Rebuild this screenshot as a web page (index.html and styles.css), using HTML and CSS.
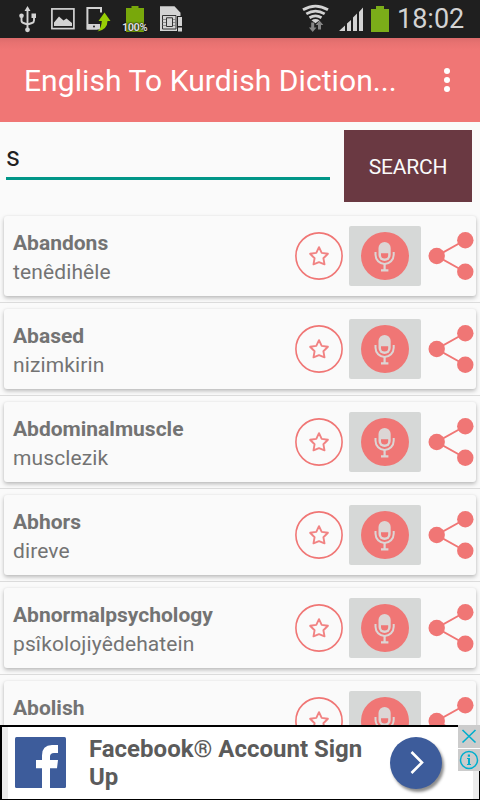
FILE: index.html
```html
<!DOCTYPE html>
<html lang="en">
<head>
    <meta charset="UTF-8">
    <meta name="viewport" content="width=device-width, initial-scale=1.0">
    <title>English To Kurdish Dictionary</title>
    <link rel="stylesheet" href="styles.css">
</head>
<body>
    <svg class="symbols">
        <symbol id="star" viewBox="0 0 48 48">
            <circle cx="24" cy="24" r="23.1" fill="none" stroke="#f07675" stroke-width="1.6"/>
            <path d="M24 15.200l2.700 5.700 6.200.9-4.500 4.400 1.100 6.100-5.500-2.100-5.500 2.100 1.100-6.100-4.500-4.400 6.200-.9z" fill="none" stroke="#f07675" stroke-width="1.900" stroke-linejoin="round" opacity=".9"/>
        </symbol>
        <symbol id="mic" viewBox="0 0 48 48">
            <circle cx="24" cy="24" r="24" fill="#f07675"/>
            <path d="M17.500 16a6.100 6.100 0 0 1 12.200 0v7a6.100 6.100 0 0 1-12.200 0z" fill="#dcd6d5"/>
            <path d="M20 21.300h7.200v1.700a3.600 3.600 0 0 1-7.200 0z" fill="#f07675"/>
            <path d="M14.500 20v2.800a9.100 9.100 0 0 0 18.200 0V20" fill="none" stroke="#dcd6d5" stroke-width="2"/>
            <path d="M23.600 31.500v7M20 38.300h7.400" fill="none" stroke="#dcd6d5" stroke-width="2.200"/>
        </symbol>
        <symbol id="share" viewBox="0 0 46 48">
            <path d="M37.300 8L8.700 24l28.600 16" fill="none" stroke="#f07675" stroke-width="2"/>
            <circle cx="37.300" cy="8.200" r="8.200" fill="#f07675"/>
            <circle cx="8.700" cy="24" r="8.200" fill="#f07675"/>
            <circle cx="37.300" cy="39.800" r="8.200" fill="#f07675"/>
        </symbol>
    </svg>

    <div class="screen">
        <div class="status-bar">
            <svg class="status-icons" width="200" height="38" viewBox="0 0 200 38">
                <!-- usb -->
                <path d="M27.500 10v20M21.500 16v4.500q0 2 2 2.500l4 1.500M34 17v3.500q0 2-2 2.500l-4.500 1.500" fill="none" stroke="#d3d3d3" stroke-width="1.900"/>
                <path d="M27.500 6l3 5h-6zM31.500 13.500h4.500v4.500h-4.500z" fill="#d3d3d3"/>
                <circle cx="21.500" cy="15.800" r="2.300" fill="#d3d3d3"/>
                <circle cx="27.500" cy="29.800" r="2.400" fill="#d3d3d3"/>
                <!-- picture -->
                <rect x="51.900" y="8.900" width="22" height="19.700" fill="none" stroke="#d3d3d3" stroke-width="1.700"/>
                <path d="M54 26v-3.500l5-6 4.500 4 3-2 5.500 4.500v3z" fill="#d3d3d3"/>
                <!-- phone update -->
                <path d="M101 12.500V8H87.400v20.600h10" fill="none" stroke="#d3d3d3" stroke-width="2"/>
                <path d="M87 24h13v5.500H87z" fill="#d3d3d3"/>
                <circle cx="94" cy="26.500" r="1" fill="#222"/>
                <path d="M104.500 12.500l6 8.500h-3q0 8.500-10 10.500 4-3.500 4.300-10.500h-3.300z" fill="#98cf05"/>
                <!-- battery level -->
                <path d="M126 8h5.500V6h7v2h5.500v24h-18z" fill="#78a80b"/>
                <!-- sim card -->
                <path d="M160 6.200h14.500l6 6.500V31H160z" fill="#d3d3d3"/>
                <path d="M162.500 15.500h13.500v13.500h-13.500z" fill="none" stroke="#333"/>
                <path d="M162.500 19.500h4M162.500 22.500h4M162.500 25.500h4M172.500 19.500h3.500M172.500 22.500h3.500M172.500 25.500h3.500" stroke="#777" stroke-width=".8"/>
                <path d="M166.500 17.800h6v8.700h-6z" fill="#d3d3d3" stroke="#333"/>
                <path d="M177 16h6v16h-6z" fill="#1f1f1f"/>
                <path d="M178 17h4v9h-4zM178 27.500h4v4h-4z" fill="#d3d3d3"/>
            </svg>
            <span class="battery-level">100%</span>
            <svg class="signal-icons" width="92" height="38" viewBox="300 0 92 38">
                <g fill="none" stroke="#d3d3d3" stroke-width="2.800">
                    <path d="M303 9.800q12.500-7.500 25 0M306.300 13.900q9.200-5.500 18.400 0M309.500 17.700q6-3.600 12 0"/>
                </g>
                <path d="M311.500 20.300q4-2.500 8 0l-4 3z" fill="#d3d3d3"/>
                <path d="M311.200 22.500h3v5h2.300l-3.800 4.500-3.800-4.500h2.300zM318 29.500h3v-4.500h2.300l-3.800-4.500-3.800 4.500h2.300z" fill="#858585"/>
                <path d="M339 31l6-5.500V31zM347 23.500l4-3.500v11h-4zM353 17.500l4-4v17.500h-4zM359 12l4-4.500V31h-4z" fill="#d3d3d3"/>
                <path d="M371 9h5V6h8v3h5v23h-18z" fill="#7bad19"/>
            </svg>
            <span class="clock">18:02</span>
        </div>

        <div class="toolbar">
            <span class="title">English To Kurdish Diction...</span>
            <div class="menu"><i></i><i></i><i></i></div>
        </div>

        <div class="search">
            <input class="search-input" type="text" value="s">
            <button class="search-button">SEARCH</button>
        </div>

        <div class="list">
            <div class="item">
                <div class="card">
                    <div class="words"><b>Abandons</b><span>tenêdihêle</span></div>
                    <svg class="star"><use href="#star"/></svg>
                    <div class="mic"><svg><use href="#mic"/></svg></div>
                    <svg class="share"><use href="#share"/></svg>
                </div>
            </div>
            <div class="item">
                <div class="card">
                    <div class="words"><b>Abased</b><span>nizimkirin</span></div>
                    <svg class="star"><use href="#star"/></svg>
                    <div class="mic"><svg><use href="#mic"/></svg></div>
                    <svg class="share"><use href="#share"/></svg>
                </div>
            </div>
            <div class="item">
                <div class="card">
                    <div class="words"><b>Abdominalmuscle</b><span>musclezik</span></div>
                    <svg class="star"><use href="#star"/></svg>
                    <div class="mic"><svg><use href="#mic"/></svg></div>
                    <svg class="share"><use href="#share"/></svg>
                </div>
            </div>
            <div class="item">
                <div class="card">
                    <div class="words"><b>Abhors</b><span>direve</span></div>
                    <svg class="star"><use href="#star"/></svg>
                    <div class="mic"><svg><use href="#mic"/></svg></div>
                    <svg class="share"><use href="#share"/></svg>
                </div>
            </div>
            <div class="item">
                <div class="card">
                    <div class="words"><b>Abnormalpsychology</b><span>psîkolojiyêdehatein</span></div>
                    <svg class="star"><use href="#star"/></svg>
                    <div class="mic"><svg><use href="#mic"/></svg></div>
                    <svg class="share"><use href="#share"/></svg>
                </div>
            </div>
            <div class="item">
                <div class="card">
                    <div class="words"><b>Abolish</b></div>
                    <svg class="star"><use href="#star"/></svg>
                    <div class="mic"><svg><use href="#mic"/></svg></div>
                    <svg class="share"><use href="#share"/></svg>
                </div>
            </div>
        </div>

        <div class="ad">
            <svg class="ad-logo" width="51" height="51" viewBox="0 0 51 51">
                <rect width="51" height="51" rx="1.500" fill="#3d5c9b"/>
                <path d="M27 51V31.300h-6V23h6v-4.500Q27 8 37 8h6v8h-4q-4 0-4 3.500V23h8l-1 8.300h-7V51z" fill="#fff"/>
            </svg>
            <div class="ad-text">Facebook® Account Sign Up</div>
            <div class="ad-go">
                <svg width="52" height="52" viewBox="0 0 52 52"><path d="M21.500 15l10.500 10.500L21.500 36" fill="none" stroke="#fff" stroke-width="2.600"/></svg>
            </div>
            <div class="ad-controls">
                <svg width="22" height="23" viewBox="0 0 22 23"><path d="M4.500 5l13 12.500M17.500 5l-13 12.500" stroke="#00aecd" stroke-width="1.600"/></svg>
                <svg width="22" height="22" viewBox="0 0 22 22"><circle cx="11" cy="11" r="8.500" fill="none" stroke="#00aecd" stroke-width="1.500"/><path d="M9.800 5.500h2.200v2.200H9.800zM9 9h3v6h1v1H9v-1h1v-5H9z" fill="#00aecd"/></svg>
            </div>
        </div>
    </div>
</body>
</html>
```

FILE: styles.css
```css
* {
    box-sizing: border-box;
}
body {
    margin: 0;
    font-family: Roboto, sans-serif;
    background: #fafafa;
}
svg {
    display: block;
    flex: none;
}
.symbols {
    position: absolute;
    width: 0;
    height: 0;
}
.screen {
    display: flex;
    flex-direction: column;
    width: 480px;
    height: 800px;
    overflow: hidden;
}
.status-bar {
    position: relative;
    display: flex;
    justify-content: space-between;
    flex: none;
    height: 38px;
    padding-right: 15px;
    background: #1f1f1f;
}
.signal-icons {
    margin-left: auto;
}
.battery-level {
    position: absolute;
    left: 122px;
    top: 21px;
    font-size: 11px;
    line-height: 13px;
    font-weight: bold;
    letter-spacing: -0.5px;
    color: #ddd;
    text-shadow: 0 0 1px #000, 0 0 2px #000;
}
.clock {
    width: 73px;
    padding-left: 5px;
    font-size: 27px;
    line-height: 38px;
    white-space: nowrap;
    color: #d3d3d3;
}
.toolbar {
    display: flex;
    align-items: center;
    justify-content: space-between;
    flex: none;
    height: 84px;
    padding: 0 28px 0 24px;
    background: linear-gradient(#dc6b6b 0, #e87271 5px, #f07675 12px);
    color: #fff;
}
.title {
    font-size: 30px;
    letter-spacing: 0.07px;
    white-space: nowrap;
}
.menu {
    display: flex;
    flex-direction: column;
    gap: 3px;
    padding-right: 2px;
}
.menu i {
    width: 6px;
    height: 6px;
    border-radius: 50%;
    background: #fff;
}
.search {
    display: flex;
    flex: none;
    height: 88px;
    padding: 8px 8px 8px 6px;
    gap: 14px;
}
.search-input {
    width: 324px;
    height: 50px;
    padding: 6px 0 0;
    border: none;
    border-bottom: 3px solid #009688;
    outline: none;
    background: none;
    font-family: inherit;
    font-size: 27px;
    color: #212121;
}
.search-button {
    width: 128px;
    height: 72px;
    padding: 2px 0 0;
    border: none;
    background: #6a3942;
    font-family: inherit;
    font-size: 21px;
    letter-spacing: -0.2px;
    color: #fafafa;
}
.list {
    flex: 1;
    min-height: 0;
    overflow: hidden;
}
.item {
    height: 93px;
    padding: 6px 4px;
    border-bottom: 1px solid #dcdcdc;
}
.card {
    display: flex;
    align-items: center;
    height: 80px;
    padding-right: 2px;
    border-radius: 3px;
    background: #fafafa;
    box-shadow: 0 2px 4px rgba(0, 0, 0, 0.26), 0 0 2px rgba(0, 0, 0, 0.06);
}
.words {
    display: flex;
    flex-direction: column;
    align-self: flex-start;
    width: 291px;
    padding: 13px 0 0 9px;
    font-size: 21px;
    line-height: 29px;
    color: #737373;
    white-space: nowrap;
}
.words span {
    letter-spacing: 0.12px;
}
.star {
    width: 48px;
    height: 48px;
}
.mic {
    width: 72px;
    height: 60px;
    margin: 0 7px 0 6px;
    padding: 6px 12px;
    border-radius: 2px;
    background: #d6d8d7;
}
.mic svg {
    width: 48px;
    height: 48px;
}
.share {
    width: 46px;
    height: 48px;
}
.ad {
    position: relative;
    display: flex;
    flex: none;
    height: 75px;
    padding: 10px 0 0 7px;
    border: solid #000;
    border-width: 2px 1px 1px 2px;
    background: linear-gradient(to right, #ececec 6px, #fff 6px, #fff 471px, #ececec 471px);
}
.ad-logo {
    margin-left: 6px;
}
.ad-text {
    width: 290px;
    margin-left: 23px;
    margin-top: -2px;
    font-size: 24px;
    line-height: 28px;
    font-weight: bold;
    color: #5b5b5b;
}
.ad-go {
    width: 52px;
    height: 52px;
    margin-left: 11px;
    border-radius: 50%;
    background: #3d5c9b;
    box-shadow: 2px 3px 3px rgba(0, 0, 0, 0.45);
}
.ad-controls {
    position: absolute;
    top: -2px;
    right: -1px;
    display: flex;
    flex-direction: column;
    gap: 1px;
    background: #fff;
}
.ad-controls svg {
    background: #ccc;
}
```
